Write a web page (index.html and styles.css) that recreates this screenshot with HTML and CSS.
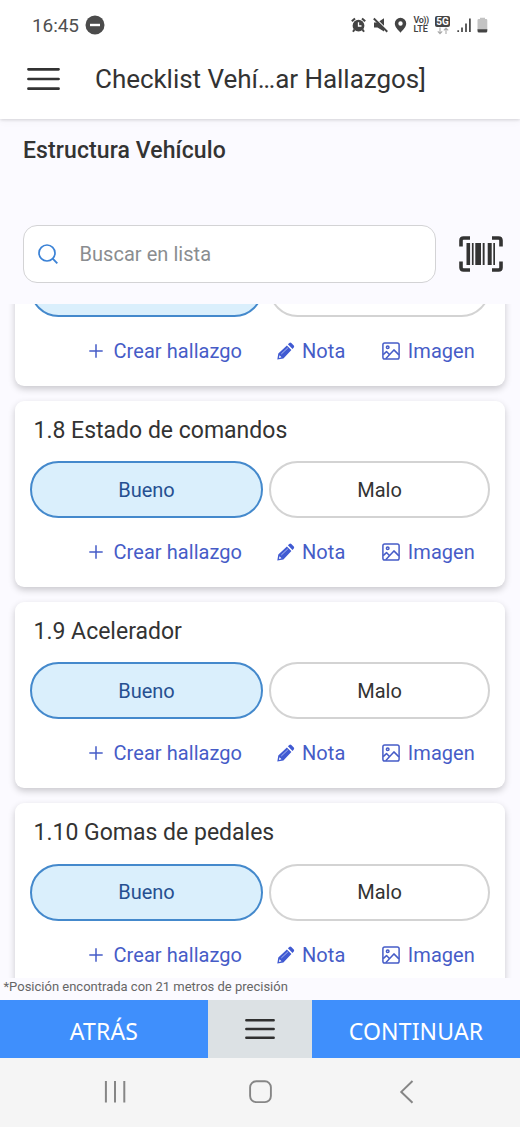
FILE: index.html
```html
<!DOCTYPE html>
<html lang="es">
<head>
<meta charset="utf-8">
<title>Checklist Vehículo</title>
<link rel="stylesheet" href="styles.css">
</head>
<body>
<svg class="defs" aria-hidden="true">
  <symbol id="plus" viewBox="0 0 14 14"><path d="M7 .3v13.4M.3 7h13.4" fill="none" stroke="currentColor" stroke-width="1.5"/></symbol>
  <symbol id="pencil" viewBox="0 0 18 18"><path fill="currentColor" fill-rule="evenodd" d="M.3 17.5 1.3 11.400 9.900 3.400 14.400 7.900 6.400 16.500ZM1.900 15.900 4.500 15.300 2.500 13.300ZM10.900 2.300 12.300 1Q13.300.2 14.300 1.100L16.800 3.600Q17.600 4.500 16.800 5.500L15.500 6.900Z"/><path d="m4.300 12 6.600-6.200" stroke="#c3cdf5" stroke-width=".8"/></symbol>
  <symbol id="image" viewBox="0 0 18 18"><g fill="none" stroke="currentColor" stroke-width="1.500"><rect x=".9" y=".9" width="16.200" height="16.200" rx="1.800"/><circle cx="5.700" cy="5.300" r="1.300"/><path d="m3.700 16.800 8.200-8.900 5 5M1.200 12.600l3.300-3 2.900 3" stroke-linejoin="round"/></g></symbol>
  <symbol id="menu" viewBox="0 0 34 24"><path d="M1.500 2h31M1.500 12h31M1.500 22h31" stroke="currentColor" stroke-width="2.800" stroke-linecap="round"/></symbol>
</svg>

<div class="status">
  <span class="clock">16:45</span>
  <svg class="dnd" viewBox="0 0 20 20"><circle cx="10" cy="10" r="9.500" fill="#4b4b4b"/><path d="M5 10h10" stroke="#fff" stroke-width="2.400"/></svg>
  <div class="status-icons">
    <svg width="15" height="16" viewBox="0 0 15 16"><circle cx="7.500" cy="8.700" r="5.900" fill="#444"/><path d="M.8 4.300 4 1.400M14.200 4.300 11 1.400M3.500 12.500l-1.500 2.300M11.500 12.500l1.500 2.300" stroke="#444" stroke-width="2"/><path d="M7.500 5.200v3.800h3" fill="none" stroke="#fff" stroke-width="1.300"/></svg>
    <svg width="15" height="16" viewBox="0 0 15 16"><path d="M1 5.500h3.500L11 1.200v13.300L4.500 10.500H1Z" fill="#444"/><path d="m1.800 .7 13 12.800" stroke="#fff" stroke-width="1.400"/><path d="m.8 1.500 13.500 13.300" stroke="#444" stroke-width="1.900"/></svg>
    <svg width="13" height="16" viewBox="0 0 13 16"><path fill="#444" fill-rule="evenodd" d="M6.500 .8a5.700 5.700 0 0 1 5.700 5.700C12.200 10 9 12.700 6.500 15.700 4 12.700.8 10 .8 6.500A5.700 5.700 0 0 1 6.500 .8Zm0 3.500a2.200 2.200 0 1 0 0 4.400 2.200 2.200 0 0 0 0-4.400Z"/></svg>
    <div class="volte"><span>Vo))</span><span class="lte">LTE</span></div>
    <div class="net"><span class="net-label">5G</span><svg width="12" height="8" viewBox="0 0 12 8"><path d="M3 .5v6M.8 4.300 3 6.700l2.200-2.400M9 7V1M6.800 3.300 9 1l2.200 2.300" fill="none" stroke="#aaa" stroke-width="1.100"/></svg></div>
    <svg width="14" height="16" viewBox="0 0 14 16"><path d="M1.200 13.200V15M5 10.500V15M9 6.500V15M12.900 1.500V15" stroke="#444" stroke-width="1.700"/></svg>
    <svg width="11" height="16" viewBox="0 0 11 16"><path d="M3 .8h5V2h1.200q1.100 0 1.100 1.200V13H.5V3.200Q.5 2 1.700 2H3Z" fill="#c3c3c3"/><path d="M.5 12.200h9.800v1.700q0 1.500-1.400 1.500H2q-1.500 0-1.500-1.500Z" fill="#444"/></svg>
  </div>
</div>

<header class="bar">
  <svg class="bar-menu"><use href="#menu"/></svg>
  <h1 class="bar-title">Checklist Vehí…ar Hallazgos]</h1>
</header>

<section class="filter">
  <h2 class="section-title">Estructura Vehículo</h2>
  <div class="search-row">
    <div class="search">
      <svg class="search-icon" viewBox="0 0 20 20"><circle cx="9" cy="9" r="8" fill="none" stroke="#3b82d6" stroke-width="1.700"/><path d="m14.700 14.700 4.600 4.600" stroke="#3b82d6" stroke-width="1.900"/></svg>
      <span class="placeholder">Buscar en lista</span>
    </div>
    <svg class="barcode" viewBox="0 0 44 36"><path d="M2 10.500V4.500Q2 2 4.500 2H11M33 2h6.500Q42 2 42 4.500v6M42 25.500v6Q42 34 39.500 34H33M11 34H4.500Q2 34 2 31.500v-6" fill="none" stroke="#333" stroke-width="3.600"/><path fill="#333" d="M7.500 7h3.600v22H7.500zM12.900 7h1.700v22h-1.700zM16.300 7H22v22h-5.700zM23.700 7h1.900v22h-1.900zM28.700 7h4v22h-4zM34.300 7H36v22h-1.700z"/></svg>
  </div>
</section>

<main class="list">
  <article class="card">
    <div class="card-title"></div>
    <div class="options"><div class="option good"></div><div class="option bad"></div></div>
    <div class="actions"><span class="action create"><svg><use href="#plus"/></svg>Crear hallazgo</span><span class="action note"><svg><use href="#pencil"/></svg>Nota</span><span class="action picture"><svg><use href="#image"/></svg>Imagen</span></div>
  </article>
  <article class="card">
    <h3 class="card-title">1.8 Estado de comandos</h3>
    <div class="options"><div class="option good">Bueno</div><div class="option bad">Malo</div></div>
    <div class="actions"><span class="action create"><svg><use href="#plus"/></svg>Crear hallazgo</span><span class="action note"><svg><use href="#pencil"/></svg>Nota</span><span class="action picture"><svg><use href="#image"/></svg>Imagen</span></div>
  </article>
  <article class="card">
    <h3 class="card-title">1.9 Acelerador</h3>
    <div class="options"><div class="option good">Bueno</div><div class="option bad">Malo</div></div>
    <div class="actions"><span class="action create"><svg><use href="#plus"/></svg>Crear hallazgo</span><span class="action note"><svg><use href="#pencil"/></svg>Nota</span><span class="action picture"><svg><use href="#image"/></svg>Imagen</span></div>
  </article>
  <article class="card">
    <h3 class="card-title">1.10 Gomas de pedales</h3>
    <div class="options"><div class="option good">Bueno</div><div class="option bad">Malo</div></div>
    <div class="actions"><span class="action create"><svg><use href="#plus"/></svg>Crear hallazgo</span><span class="action note"><svg><use href="#pencil"/></svg>Nota</span><span class="action picture"><svg><use href="#image"/></svg>Imagen</span></div>
  </article>
</main>

<p class="position">*Posición encontrada con 21 metros de precisión</p>

<footer class="footer">
  <div class="nav-button">ATRÁS</div>
  <div class="nav-menu"><svg><use href="#menu"/></svg></div>
  <div class="nav-button">CONTINUAR</div>
</footer>

<div class="system">
  <svg width="24" height="24" viewBox="0 0 24 24"><path d="M2.900 1v21.500M12 1v21.500M21.300 1v21.500" stroke="#868686" stroke-width="2"/></svg>
  <svg width="24" height="24" viewBox="0 0 24 24"><rect x="2.100" y="1.300" width="20.800" height="20.800" rx="6" fill="none" stroke="#868686" stroke-width="1.900"/></svg>
  <svg width="24" height="24" viewBox="0 0 24 24"><path d="M19.500 1 8.300 11.900 19.500 22.700" fill="none" stroke="#868686" stroke-width="2"/></svg>
</div>
</body>
</html>
```
FILE: styles.css
```css
* { box-sizing: border-box; }

body {
  margin: 0;
  width: 520px;
  height: 1127px;
  overflow: hidden;
  display: flex;
  flex-direction: column;
  background: #fbfaff;
  color: #333;
  font-family: Roboto, "Liberation Sans", sans-serif;
}

h1, h2, h3, p { margin: 0; font-weight: 400; }
svg { display: block; flex: none; }
.defs { position: absolute; width: 0; height: 0; }

.status {
  position: relative;
  z-index: 2;
  height: 48px;
  flex: none;
  display: flex;
  align-items: center;
  padding: 2px 32px 0 32px;
  background: #fff;
}
.clock { width: 47px; font-size: 19px; color: #505050; letter-spacing: -.1px; white-space: nowrap; }
.dnd { width: 20px; height: 20px; margin-left: 6px; }
.status-icons { display: flex; align-items: center; gap: 6.500px; margin-left: auto; }
.volte { display: flex; flex-direction: column; width: 15px; font-size: 9px; line-height: 9px; font-weight: 600; color: #444; letter-spacing: -.45px; white-space: nowrap; }
.lte { letter-spacing: -.1px; }
.net { display: flex; flex-direction: column; align-items: center; width: 15px; }
.net-label { width: 15px; height: 11px; border-radius: 2px; background: #444; color: #fff; font-size: 10px; line-height: 11px; font-weight: 700; text-align: center; }

.bar {
  position: relative;
  z-index: 1;
  height: 71px;
  flex: none;
  display: flex;
  align-items: center;
  padding: 0 27px 9px;
  background: #fff;
  box-shadow: 0 1px 3px rgba(0, 0, 0, .14), 0 3px 8px rgba(0, 0, 0, .03);
}
.bar-menu { width: 33px; height: 24px; }
.bar-title { margin-left: 35px; font-size: 26px; letter-spacing: -.04px; white-space: nowrap; }

.filter { height: 185px; flex: none; padding: 15px 17px 0 23px; }
.section-title { height: 30px; line-height: 33px; font-size: 23px; letter-spacing: .1px; font-weight: 500; white-space: nowrap; }
.search-row { display: flex; align-items: center; justify-content: space-between; margin-top: 61px; }
.search {
  width: 413px;
  height: 58px;
  display: flex;
  align-items: center;
  padding: 0 14px;
  border: 1.5px solid #d3d3d5;
  border-radius: 14px;
  background: #fff;
}
.search-icon { width: 20px; height: 20px; }
.placeholder { margin-left: 21.500px; font-size: 20px; letter-spacing: .04px; color: #8a8d90; white-space: nowrap; }
.barcode { width: 44px; height: 36px; }

.list { height: 674px; flex: none; overflow: hidden; padding: 0 15px 0 14.500px; }
.card {
  height: 186.300px;
  margin-bottom: 15px;
  padding: 0 15px 0 15.500px;
  border-radius: 9px;
  background: #fff;
  box-shadow: 0 3px 7px rgba(0, 0, 0, .2);
}
.card:first-child { margin-top: -104.800px; }
.card-title { height: 60.500px; padding-left: 3.500px; font-size: 23px; line-height: 59px; white-space: nowrap; }
.options { display: flex; gap: 6px; }
.option {
  height: 57px;
  display: flex;
  align-items: center;
  justify-content: center;
  border: 2px solid #d3d3d3;
  border-radius: 29px;
  font-size: 20px;
}
.good { width: 233px; border-color: #4489cc; background: #daeffc; color: #264f91; }
.bad { width: 221px; }
.actions { display: flex; height: 68px; align-items: center; padding-left: 59px; color: #465cc7; }
.action { display: flex; align-items: center; font-size: 20px; letter-spacing: .06px; white-space: nowrap; }
.create svg { width: 14px; height: 14px; margin-right: 10.500px; }
.create { width: 187.500px; }
.note svg { width: 18px; height: 18px; margin-right: 7.500px; color: #405ad2; }
.note { width: 105px; }
.picture svg { width: 18px; height: 18px; margin-right: 8.300px; }

.position { height: 22px; flex: none; padding-left: 3.500px; font-size: 13px; line-height: 17px; color: #666; white-space: nowrap; }

.footer { height: 57.500px; flex: none; display: flex; }
.nav-button {
  width: 208px;
  display: flex;
  align-items: center;
  justify-content: center;
  padding-top: 4px;
  background: #3f8ffc;
  color: #fff;
  font-family: "Noto Sans", sans-serif;
  font-size: 23px;
  letter-spacing: .15px;
}
.nav-menu { width: 104px; display: flex; align-items: center; justify-content: center; background: #dce1e4; color: #303030; }
.nav-menu svg { width: 30px; height: 22px; }

.system { flex: 1; display: flex; justify-content: space-between; padding: 22.500px 103px 0; background: #f5f5f5; }
```
